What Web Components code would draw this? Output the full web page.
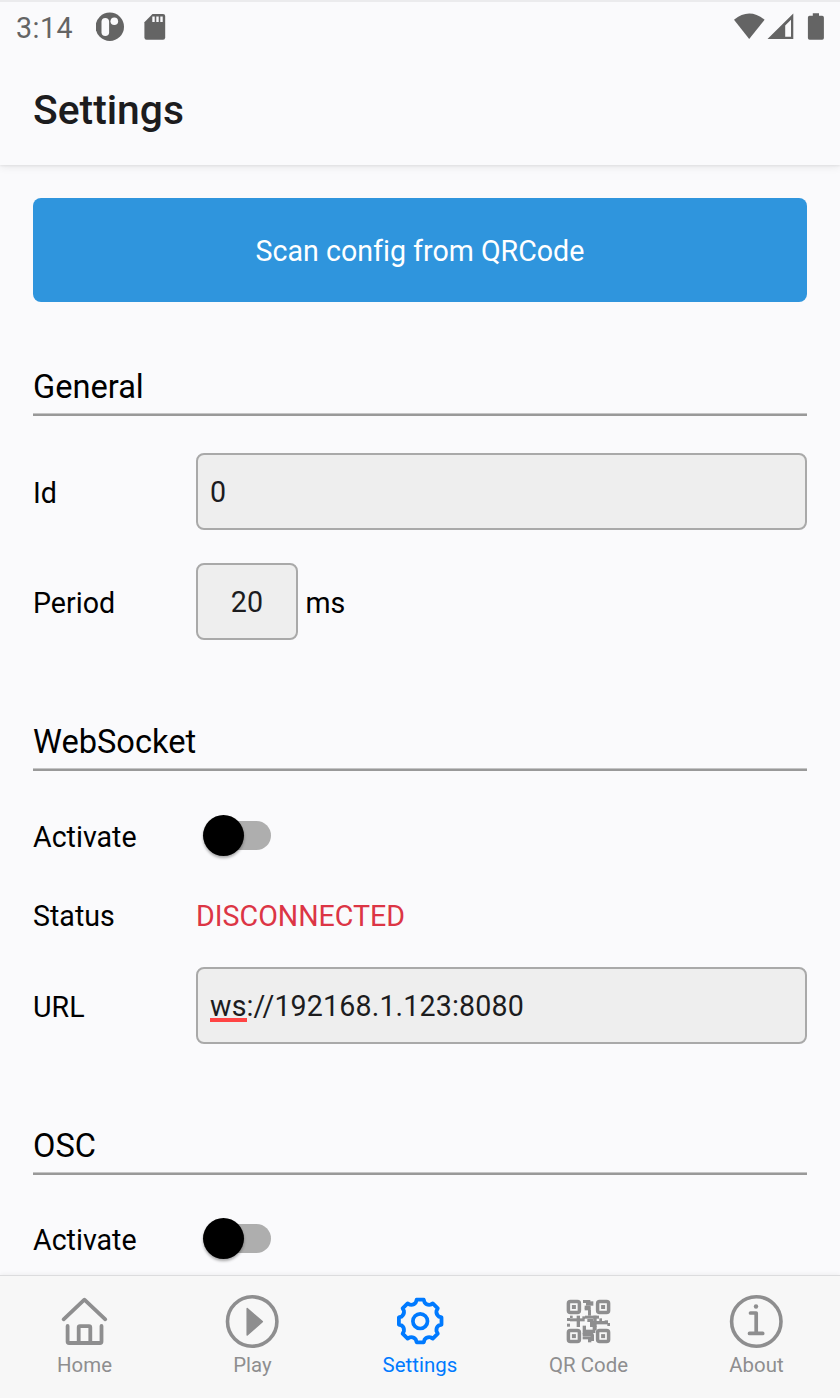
<!DOCTYPE html>
<html lang="en">
<head>
<meta charset="utf-8">
<title>Settings</title>
<style>
html,body{margin:0;height:1398px;overflow:hidden;background:#fafafc;font-family:Roboto,sans-serif;font-variant-ligatures:none;color:#000}
</style>
</head>
<body>
<app-screen>
  <status-bar slot="top">3:14</status-bar>
  <app-header slot="top">Settings</app-header>
  <action-button>Scan config from QRCode</action-button>
  <form-section heading="General">
    <form-row label="Id" style="--h:77px;--mt:37px"><text-box>0</text-box></form-row>
    <form-row label="Period" style="--h:77px;--mt:33px"><text-box class="short" unit="ms">20</text-box></form-row>
  </form-section>
  <form-section heading="WebSocket" style="--mt:83px">
    <form-row label="Activate" style="--h:55px;--mt:37px"><toggle-switch></toggle-switch></form-row>
    <form-row label="Status" style="--h:40px;--mt:32px;--lp:2px"><status-text>DISCONNECTED</status-text></form-row>
    <form-row label="URL" style="--h:77px;--mt:32px"><text-box misspelt="ws">://192168.1.123:8080</text-box></form-row>
  </form-section>
  <form-section heading="OSC" style="--mt:82.500px">
    <form-row label="Activate" style="--h:55px;--mt:36.500px"><toggle-switch></toggle-switch></form-row>
  </form-section>
  <tab-bar slot="bottom">
    <tab-item icon="home">Home</tab-item>
    <tab-item icon="play">Play</tab-item>
    <tab-item icon="gear" active>Settings</tab-item>
    <tab-item icon="qr">QR Code</tab-item>
    <tab-item icon="info">About</tab-item>
  </tab-bar>
</app-screen>
<script>
const define = (name, html) => customElements.define(name, class extends HTMLElement {
  connectedCallback() {
    if (this.shadowRoot) return;
    this.attachShadow({mode: 'open'}).innerHTML = typeof html === 'function' ? html(this) : html;
  }
});

define('app-screen', `<style>
:host{display:flex;flex-direction:column;height:1398px;box-sizing:border-box;border-top:2px solid #ebebed;background:#fafafc;overflow:hidden}
.top{flex:none;position:relative;z-index:1}
main{flex:1;min-height:0;overflow:hidden;padding:32px 33px 0}
.bottom{flex:none;position:relative;z-index:1}
</style><div class="top"><slot name="top"></slot></div><main><slot></slot></main><div class="bottom"><slot name="bottom"></slot></div>`);

define('status-bar', `<style>
:host{display:flex;align-items:center;height:51px;padding:0 14px 0 16px;color:#646464;font-size:28.6px;letter-spacing:.5px}
.t{width:80px;white-space:nowrap}
svg{display:block;fill:#646464;margin-top:-1px}
.sd{margin-left:20px}
.sp{flex:1}
</style><span class="t"><slot></slot></span>
<svg width="28" height="30" viewBox="96 12 28 30"><circle cx="109.8" cy="26.8" r="14.2"/><rect x="101.5" y="18" width="7.6" height="18" rx="3.8" fill="#fafafc"/><circle cx="114.3" cy="21.3" r="3.8" fill="#fafafc"/></svg>
<svg class="sd" width="22" height="30" viewBox="144 12 22 30"><path d="M152.5 13.9H163a2.2 2.2 0 0 1 2.2 2.2v21.5a2.2 2.2 0 0 1-2.2 2.2H146.6a2.2 2.2 0 0 1-2.2-2.2V22.2Z"/><path fill="#fafafc" d="M152.300 16.500h2.400v5.500h-2.400zM156.300 16.500h2.400v5.500h-2.400zM160.300 16.500h2.400v5.500h-2.400z"/></svg>
<span class="sp"></span>
<svg width="93" height="30" viewBox="733 12 93 30"><path d="M749.200 39 734 19.800Q749.200 7.200 764.600 19.800Z"/><path fill-rule="evenodd" d="M767.500 39 793.300 13.500V39ZM785.200 25.500V36.700H791V19.700Z"/><path d="M812.800 13.300h6.200v2.500h3.200q1.700 0 1.700 1.700v20.600q0 1.700-1.700 1.700h-12.600q-1.700 0-1.700-1.700V17.500q0-1.700 1.700-1.700h3.200z"/></svg>`);

define('app-header', `<style>
:host{display:flex;align-items:center;height:112px;box-sizing:border-box;padding:2px 33px 0;background:#fafafc;color:#1c1c1e;font-size:40.8px;font-weight:500;box-shadow:0 1px 2px #00000010,0 2px 8px #00000014;clip-path:inset(0 0 -14px 0)}
</style><span><slot></slot></span>`);

define('action-button', `<style>
:host{display:flex;align-items:center;justify-content:center;height:104px;margin-top:1px;border-radius:8px;background:#2f95dd;color:#fff;font-size:28.6px}
span{padding-top:1px}
</style><span><slot></slot></span>`);

define('form-section', el => `<style>
:host{display:block;margin-top:var(--mt,66px)}
h2{margin:0;font-size:32.6px;font-weight:400;line-height:39px;height:48px;background:linear-gradient(#c4c4c5 0 1px,#999 1px) 0 100%/100% 3px no-repeat}
</style><h2>${el.getAttribute('heading')}</h2><slot></slot>`);

define('form-row', el => `<style>
:host{display:flex;align-items:center;height:var(--h);margin-top:var(--mt);font-size:28.6px}
label{width:163px;flex:none;padding-top:var(--lp,3px)}
div{flex:1;min-width:0}
</style><label>${el.getAttribute('label')}</label><div><slot></slot></div>`);

define('text-box', el => `<style>
:host{display:flex;align-items:center;gap:7.500px}
.b{flex:1;box-sizing:border-box;height:77px;border:2px solid #a9a9a9;border-radius:8px;background:#eee;color:#1c1c1e;line-height:75px;padding-left:12px;letter-spacing:.15px}
:host(.short) .b{flex:none;width:102px;padding:0;text-align:center}
.m{display:inline-block;position:relative}
.m::after{content:"";position:absolute;left:0;right:0;top:49px;height:4px;background:#ff4444}
.u{padding-top:3px}
</style><span class="b">${el.hasAttribute('misspelt') ? `<span class="m">${el.getAttribute('misspelt')}</span>` : ''}<slot></slot></span>${el.hasAttribute('unit') ? `<span class="u">${el.getAttribute('unit')}</span>` : ''}`);

define('status-text', `<style>:host{display:block;color:#dc3545;padding-top:2px}</style><slot></slot>`);

define('toggle-switch', `<style>
:host{display:flex;align-items:center;width:68px;height:41px;margin:-1px 0 0 7px}
.track{flex:1;height:29px;margin-left:6px;border-radius:15px;background:#aeaeae;display:flex;align-items:center}
.knob{width:41px;height:41px;margin-left:-6px;border-radius:50%;background:#000;box-shadow:0 2px 3px #0005}
</style><div class="track"><div class="knob"></div></div>`);

define('tab-bar', `<style>
:host{display:flex;height:123px;box-sizing:border-box;border-top:1px solid #dcdcde;background:#f7f7f7;box-shadow:0 -1px 4px #0000000d}
</style><slot></slot>`);

const gearPath = (() => {
  const at = (deg, r) => {
    const a = (deg - 90) * Math.PI / 180;
    return (27.2 + r * Math.cos(a)).toFixed(2) + ' ' + (27 + r * Math.sin(a)).toFixed(2);
  };
  let d = '';
  for (let i = 0; i < 8; i++) {
    const c = i * 45;
    d += (i ? 'L' : 'M') + at(c - 9.5, 21.6) + 'L' + at(c + 9.5, 21.6) + 'L' + at(c + 13, 19.2) + 'Q' + at(c + 22.5, 17) + ' ' + at(c + 32, 19.2);
  }
  return d + 'Z';
})();
const finder = (x, y) => `<rect x="${x + 1.700}" y="${y + 1.700}" width="11" height="11" rx="2" fill="none" stroke="currentColor" stroke-width="3.500"/><rect x="${x + 5.200}" y="${y + 5.200}" width="4" height="4"/>`;
const modules = [[57,9,22,9],[66,13,22,13],[62,26,18,9],[62,32,18,8],[72,38,9,18],
  [18,56,8,7],[9,63,9,9],[9,80,9,9],[18,64,44,9],[38,56,10,34],[55,58,8,8],
  [63,56,42,9],[88,56,10,18],[70,66,18,9],[78,72,54,10],[106,64,8,10],[122,70,10,10],[130,78,8,9],[78,80,20,10],
  [56,86,10,26],[86,88,12,12],[66,98,28,10],[56,108,32,9],[56,118,34,9],[80,112,10,20],[72,124,10,12]];
const icons = {
  home: '<g fill="none" stroke="currentColor" stroke-width="3.800" stroke-linecap="round" stroke-linejoin="round"><path d="M6.600 25.300 27.400 5.700 48.300 25.300M10.600 32v15.500q0 1.500 1.500 1.500H43q1.500 0 1.500-1.500V32M21.700 48.500V33.500q0-1.300 1.300-1.300h9q1.300 0 1.300 1.300v15"/></g>',
  play: '<circle cx="27.200" cy="27.500" r="24.700" fill="none" stroke="currentColor" stroke-width="3.600"/><path d="M22.200 14.500 37.300 27.600 22.200 41Z" stroke="currentColor" stroke-width="1.500" stroke-linejoin="round"/>',
  gear: `<path d="${gearPath}" fill="none" stroke="currentColor" stroke-width="3.800" stroke-linejoin="round"/><circle cx="27.200" cy="27.200" r="7.300" fill="none" stroke="currentColor" stroke-width="3.700"/>`,
  qr: finder(5.700, 5.800) + finder(34.900, 5.800) + finder(5.700, 34.900) + finder(34.900, 34.900) + '<g transform="translate(3 3) scale(.3333)">' + modules.map(([x, y, w, h]) => `<rect x="${x}" y="${y}" width="${w}" height="${h}"/>`).join('') + '</g>',
  info: '<circle cx="27.300" cy="27.500" r="24.700" fill="none" stroke="currentColor" stroke-width="3.600"/><circle cx="27" cy="12.500" r="2.200"/><path d="M21.500 19h5.700v20.200M20.500 39.400h13.200" fill="none" stroke="currentColor" stroke-width="3.700" stroke-linecap="round" stroke-linejoin="round"/>'
};
define('tab-item', el => `<style>
:host{flex:1;display:flex;flex-direction:column;align-items:center;padding-top:18px;color:#8e8e8f;font-size:20.400px;letter-spacing:.05px}
:host([active]){color:#007aff}
svg{display:block;fill:currentColor}
span{line-height:24px;margin:4px 0 0 1px}
:host([active]) span{margin-left:0}
</style><svg width="54" height="55" viewBox="0 0 54 55">${icons[el.getAttribute('icon')]}</svg><span><slot></slot></span>`);
</script>
</body>
</html>
